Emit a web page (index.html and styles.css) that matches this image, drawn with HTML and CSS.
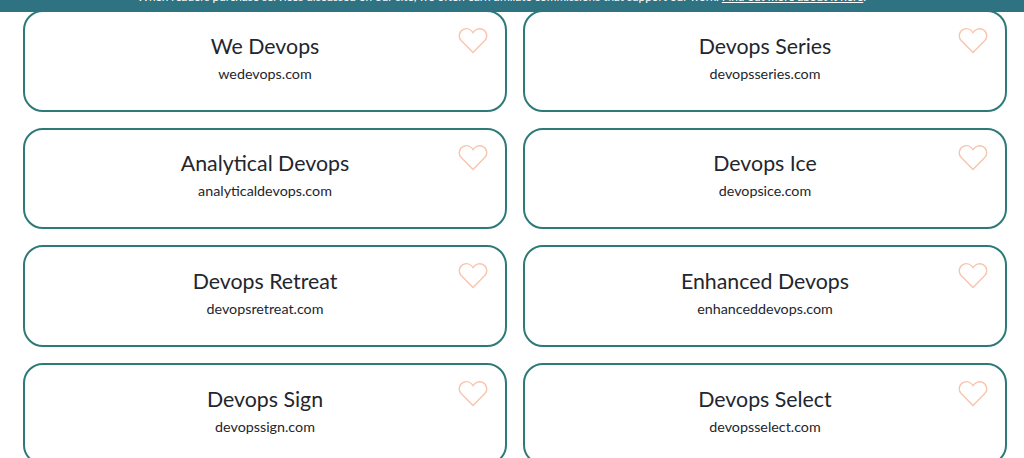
FILE: index.html
```html
<!DOCTYPE html>
<html lang="en">
<head>
<meta charset="utf-8">
<title>Devops domain names</title>
<link rel="stylesheet" href="styles.css">
</head>
<body>
<div class="notice"><p class="notice-text">When readers purchase services discussed on our site, we often earn affiliate commissions that support our work. <a href="#">Find out more about it here</a>.</p></div>
<main class="grid">
<article class="card"><h2>We Devops</h2><p>wedevops.com</p><svg class="heart" viewBox="0 0 30 27"><path d="M15 25.5 3.2 13.6C-.2 10 1.2 4.2 5.4 2.4 8.8 1 12.8 2.2 15 5.6 17.2 2.2 21.2 1 24.6 2.4 28.8 4.200 30.200 10 26.800 13.600Z"/></svg></article>
<article class="card"><h2>Devops Series</h2><p>devopsseries.com</p><svg class="heart" viewBox="0 0 30 27"><path d="M15 25.5 3.2 13.6C-.2 10 1.2 4.2 5.4 2.4 8.8 1 12.8 2.2 15 5.6 17.2 2.2 21.2 1 24.6 2.4 28.8 4.200 30.200 10 26.800 13.600Z"/></svg></article>
<article class="card"><h2>Analytical Devops</h2><p>analyticaldevops.com</p><svg class="heart" viewBox="0 0 30 27"><path d="M15 25.5 3.2 13.6C-.2 10 1.2 4.2 5.4 2.4 8.8 1 12.8 2.2 15 5.6 17.2 2.2 21.2 1 24.6 2.4 28.8 4.200 30.200 10 26.800 13.600Z"/></svg></article>
<article class="card"><h2>Devops Ice</h2><p>devopsice.com</p><svg class="heart" viewBox="0 0 30 27"><path d="M15 25.5 3.2 13.6C-.2 10 1.2 4.2 5.4 2.4 8.8 1 12.8 2.2 15 5.6 17.2 2.2 21.2 1 24.6 2.4 28.8 4.200 30.200 10 26.800 13.600Z"/></svg></article>
<article class="card"><h2>Devops Retreat</h2><p>devopsretreat.com</p><svg class="heart" viewBox="0 0 30 27"><path d="M15 25.5 3.2 13.6C-.2 10 1.2 4.2 5.4 2.4 8.8 1 12.8 2.2 15 5.6 17.2 2.2 21.2 1 24.6 2.4 28.8 4.200 30.200 10 26.800 13.600Z"/></svg></article>
<article class="card"><h2>Enhanced Devops</h2><p>enhanceddevops.com</p><svg class="heart" viewBox="0 0 30 27"><path d="M15 25.5 3.2 13.6C-.2 10 1.2 4.2 5.4 2.4 8.8 1 12.8 2.2 15 5.6 17.2 2.2 21.2 1 24.6 2.4 28.8 4.200 30.200 10 26.800 13.600Z"/></svg></article>
<article class="card"><h2>Devops Sign</h2><p>devopssign.com</p><svg class="heart" viewBox="0 0 30 27"><path d="M15 25.5 3.2 13.6C-.2 10 1.2 4.2 5.4 2.4 8.8 1 12.8 2.2 15 5.6 17.2 2.2 21.2 1 24.6 2.4 28.8 4.200 30.200 10 26.800 13.600Z"/></svg></article>
<article class="card"><h2>Devops Select</h2><p>devopsselect.com</p><svg class="heart" viewBox="0 0 30 27"><path d="M15 25.5 3.2 13.6C-.2 10 1.2 4.2 5.4 2.4 8.8 1 12.8 2.2 15 5.6 17.2 2.2 21.2 1 24.6 2.4 28.8 4.200 30.200 10 26.800 13.600Z"/></svg></article>
</main>
</body>
</html>
```
FILE: styles.css
```css
* { box-sizing: border-box; }
html, body { margin: 0; height: 458px; overflow: hidden; background: #fff; }
body { font-family: Lato, "Liberation Sans", sans-serif; color: #23262d; }
.notice { position: fixed; top: 0; left: 0; right: 0; height: 12px; background: #2f7383; overflow: hidden; z-index: 2; }
.notice-text { margin: -13px 0 0; font-size: 11.75px; line-height: 20px; color: #fff; text-align: center; padding-right: 21px; }
.notice-text a { color: #fff; text-decoration: underline; }
.grid { display: grid; grid-template-columns: 484px 484px; column-gap: 16px; row-gap: 16px; grid-auto-rows: 101.67px; padding: 10px 0 0 23px; }
.card { position: relative; border: 2px solid #2d7a78; border-radius: 20px; background: #fff; text-align: center; padding-top: 18.8px; }
.card h2 { margin: 0; font-size: 21.33px; font-weight: 400; line-height: 30px; }
.card p { margin: 3px 0 0; font-size: 14.3px; line-height: 20px; }
.heart { position: absolute; top: 14.8px; right: 17px; width: 30px; height: 27px; }
.heart path { fill: none; stroke: #f8c4ae; stroke-width: 1.4; }
```
